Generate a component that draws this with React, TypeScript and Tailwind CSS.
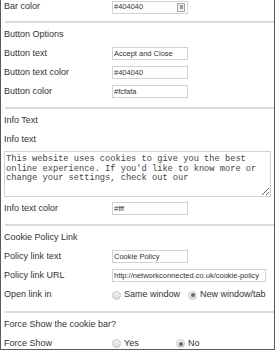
import React from 'react';

const font = { fontFamily: '"Liberation Sans", Arial, sans-serif' };

function Sep() {
    return <div className="ml-[4px] h-[2px] bg-[#dadada] shrink-0" />;
}

function Heading({ children }: { children: React.ReactNode }) {
    return <div className="h-[18px] flex items-center text-[9px] text-[#333]">{children}</div>;
}

function Field({ value, wide, picker }: { value: string; wide?: boolean; picker?: boolean }) {
    return (
        <div
            className={`relative h-[13px] border border-[#d2d2d2] bg-white flex items-center pl-[1px] text-[7.5px] text-[#333] ${wide ? 'w-[154px]' : 'w-[76px]'}`}
        >
            <span className="whitespace-nowrap">{value}</span>
            {picker && (
                <span className="absolute right-[2px] top-[1px] w-[8px] h-[9px] border border-[#a8a8a8] bg-[#ececec] flex items-start justify-center">
                    <span className="mt-[1px] w-[3px] h-[4px] bg-[#9a9a9a]" />
                </span>
            )}
        </div>
    );
}

function Row({ label, children, h = 'h-[19px]' }: { label: string; children?: React.ReactNode; h?: string }) {
    return (
        <div className={`${h} flex items-center shrink-0`}>
            <div className="w-[108px] text-[9px] text-[#333] whitespace-nowrap">{label}</div>
            {children}
        </div>
    );
}

function Radio({ checked }: { checked?: boolean }) {
    return (
        <span className="w-[9px] h-[9px] rounded-full border border-[#c8c8c8] bg-gradient-to-b from-[#f6f6f6] to-[#dadada] flex items-center justify-center shrink-0">
            {checked && <span className="w-[4px] h-[4px] rounded-full bg-[#666]" />}
        </span>
    );
}

function Option({ label, checked, w }: { label: string; checked?: boolean; w: string }) {
    return (
        <span className={`flex items-center gap-[3px] ${w}`}>
            <Radio checked={checked} />
            <span className="text-[9px] text-[#333] whitespace-nowrap">{label}</span>
        </span>
    );
}

export default function App() {
    const info =
        "This website uses cookies to give you the best online experience. If you'd like to know more or change your settings, check out our";

    return (
        <div className="w-[275px] h-[350px] bg-white border-l border-r border-b border-[#5a5a5a] overflow-hidden flex flex-col" style={font}>
            <div className="pl-[3px] h-[14px] flex items-center shrink-0">
                <div className="w-[108px] text-[9px] text-[#333]">Bar color</div>
                <Field value="#404040" picker />
            </div>

            {/* Button options */}
            <div className="mt-[7px]">
                <Sep />
            </div>
            <div className="pl-[3px] pt-[3px] flex flex-col">
                <Heading>Button Options</Heading>
                <Row label="Button text"><Field value="Accept and Close" /></Row>
                <Row label="Button text color"><Field value="#404040" /></Row>
                <Row label="Button color"><Field value="#fcfafa" /></Row>
            </div>

            {/* Info text */}
            <div className="mt-[6px]">
                <Sep />
            </div>
            <div className="pl-[3px] pt-[3px] flex flex-col">
                <Heading>Info Text</Heading>
                <Row label="Info text" />
                <textarea
                    readOnly
                    defaultValue={info}
                    className="mt-[2px] w-[267px] h-[46px] border border-[#d2d2d2] px-[1px] pt-[3px] text-[8.7px] leading-[9.7px] text-[#444] outline-none"
                    style={{ fontFamily: '"Liberation Mono", "Courier New", monospace' }}
                />
                <div className="mt-[2px]">
                    <Row label="Info text color"><Field value="#fff" /></Row>
                </div>
            </div>

            {/* Cookie policy */}
            <div className="mt-[6px]">
                <Sep />
            </div>
            <div className="pl-[3px] pt-[3px] flex flex-col">
                <Heading>Cookie Policy Link</Heading>
                <Row label="Policy link text"><Field value="Cookie Policy" /></Row>
                <Row label="Policy link URL"><Field value="http://networkconnected.co.uk/cookie-policy" wide /></Row>
                <Row label="Open link in" h="h-[20px]">
                    <Option label="Same window" w="w-[76px]" />
                    <Option label="New window/tab" checked w="w-auto" />
                </Row>
            </div>

            {/* Force show */}
            <div className="mt-[6px]">
                <Sep />
            </div>
            <div className="pl-[3px] pt-[3px] flex flex-col">
                <Heading>Force Show the cookie bar?</Heading>
                <Row label="Force Show">
                    <Option label="Yes" w="w-[64px]" />
                    <Option label="No" checked w="w-auto" />
                </Row>
            </div>
        </div>
    );
}
